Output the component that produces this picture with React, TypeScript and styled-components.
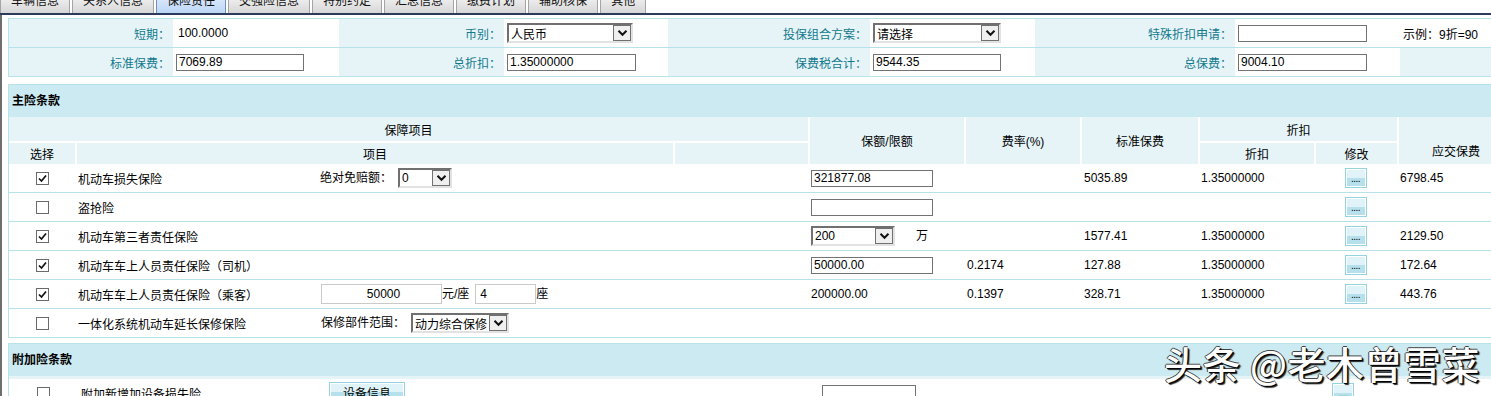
import React from 'react';
import styled, { createGlobalStyle } from 'styled-components';

const line = '#b8e2ea';
const pale = '#e6f4f8';
const band = '#cbeaf1';

const GlobalStyle = createGlobalStyle`
    html, body {
        margin: 0;
        padding: 0;
        background: #fff;
        overflow: hidden;
    }
    body {
        font-family: "Liberation Sans", Arial, "Noto Sans CJK SC", sans-serif;
        font-size: 12px;
        color: #000;
    }
`;

const tabs = ['车辆信息', '关系人信息', '保险责任', '交强险信息', '特别约定', '汇总信息', '缴费计划', '辅助核保', '其他'];

export default function App() {
    return (
        <Page>
            <GlobalStyle />
            <TabBar>
                {tabs.map((t, i) => (
                    <Tab key={t} $active={i === 2}>{t}</Tab>
                ))}
            </TabBar>
            <NavLine />
            <Main>
                <InfoTable>
                    <colgroup>
                        <Col $w={164} /><Col $w={166} /><Col $w={165} /><Col $w={164} />
                        <Col $w={202} /><Col $w={165} /><Col $w={200} /><Col $w={165} /><Col $w={113} />
                    </colgroup>
                    <tbody>
                        <InfoRow>
                            <Label>短期：</Label>
                            <Value><Plain>100.0000</Plain></Value>
                            <Label>币别：</Label>
                            <Value><Select w={126} text="人民币" /></Value>
                            <Label>投保组合方案：</Label>
                            <Value><Select w={128} text="请选择" /></Value>
                            <Label>特殊折扣申请：</Label>
                            <Value><TextBox $w={129} /></Value>
                            <Value>示例：9折=90</Value>
                        </InfoRow>
                        <InfoRow>
                            <Label>标准保费：</Label>
                            <Value><TextBox $w={128}>7069.89</TextBox></Value>
                            <Label>总折扣：</Label>
                            <Value><TextBox $w={129}>1.35000000</TextBox></Value>
                            <Label>保费税合计：</Label>
                            <Value><TextBox $w={128}>9544.35</TextBox></Value>
                            <Label>总保费：</Label>
                            <Value><TextBox $w={129}>9004.10</TextBox></Value>
                            <Label />
                        </InfoRow>
                    </tbody>
                </InfoTable>

                <Section>
                    <SectionTitle>主险条款</SectionTitle>
                    <Grid>
                        <colgroup>
                            <Col $w={66} /><Col $w={243} /><Col $w={355} /><Col $w={135} /><Col $w={156} />
                            <Col $w={116} /><Col $w={118} /><Col $w={116} /><Col $w={83} /><Col $w={116} />
                        </colgroup>
                        <thead>
                            <HeadRow $h={24}>
                                <Th colSpan={4} $first>保障项目</Th>
                                <Th rowSpan={2}>保额/限额</Th>
                                <Th rowSpan={2}>费率(%)</Th>
                                <Th rowSpan={2}>标准保费</Th>
                                <Th colSpan={2}>折扣</Th>
                                <Th rowSpan={2} $bottom>应交保费</Th>
                            </HeadRow>
                            <HeadRow $h={23}>
                                <Th $first $split>选择</Th>
                                <Th colSpan={2} $split>项目</Th>
                                <Th $split />
                                <Th $split>折扣</Th>
                                <Th $split>修改</Th>
                            </HeadRow>
                        </thead>
                        <tbody>
                            <BodyRow>
                                <Center><Check on /></Center>
                                <Td>机动车损失保险</Td>
                                <Td $pl={2}>绝对免赔额：<Gap $w={6} /><Select w={54} text="0" /></Td>
                                <Td />
                                <Td><TextBox $w={122}>321877.08</TextBox></Td>
                                <Td />
                                <Td $pl={4}>5035.89</Td>
                                <Td>1.35000000</Td>
                                <Center><DotButton /></Center>
                                <Td>6798.45</Td>
                            </BodyRow>
                            <BodyRow>
                                <Center><Check /></Center>
                                <Td>盗抢险</Td>
                                <Td /><Td />
                                <Td><TextBox $w={122} /></Td>
                                <Td /><Td /><Td />
                                <Center><DotButton /></Center>
                                <Td />
                            </BodyRow>
                            <BodyRow>
                                <Center><Check on /></Center>
                                <Td>机动车第三者责任保险</Td>
                                <Td /><Td />
                                <Td><Select w={84} text="200" /><Gap $w={21} />万</Td>
                                <Td />
                                <Td $pl={4}>1577.41</Td>
                                <Td>1.35000000</Td>
                                <Center><DotButton /></Center>
                                <Td>2129.50</Td>
                            </BodyRow>
                            <BodyRow>
                                <Center><Check on /></Center>
                                <Td>机动车车上人员责任保险（司机）</Td>
                                <Td /><Td />
                                <Td><TextBox $w={122}>50000.00</TextBox></Td>
                                <Td>0.2174</Td>
                                <Td $pl={4}>127.88</Td>
                                <Td>1.35000000</Td>
                                <Center><DotButton /></Center>
                                <Td>172.64</Td>
                            </BodyRow>
                            <BodyRow>
                                <Center><Check on /></Center>
                                <Td>机动车车上人员责任保险（乘客）</Td>
                                <Td>
                                    <SoftBox $w={121} $center>50000</SoftBox>元/座<Gap $w={6} />
                                    <SoftBox $w={61}>4</SoftBox>座
                                </Td>
                                <Td />
                                <Td>200000.00</Td>
                                <Td>0.1397</Td>
                                <Td $pl={4}>328.71</Td>
                                <Td>1.35000000</Td>
                                <Center><DotButton /></Center>
                                <Td>443.76</Td>
                            </BodyRow>
                            <BodyRow>
                                <Center><Check /></Center>
                                <Td>一体化系统机动车延长保修保险</Td>
                                <Td>保修部件范围：<Gap $w={6} /><Select w={98} text="动力综合保修" /></Td>
                                <Td /><Td /><Td /><Td /><Td /><Td /><Td />
                            </BodyRow>
                        </tbody>
                    </Grid>
                </Section>

                <Section $gap={5}>
                    <SectionTitle>附加险条款</SectionTitle>
                    <Grid>
                        <colgroup>
                            <Col $w={69} /><Col $w={248} /><Col $w={493} /><Col $w={150} />
                            <Col $w={300} /><Col $w={148} /><Col $w={96} />
                        </colgroup>
                        <thead>
                            <HeadRow $h={3}><Th colSpan={7} $first /></HeadRow>
                        </thead>
                        <tbody>
                            <BodyRow>
                                <Center><Check /></Center>
                                <Td>附加新增加设备损失险</Td>
                                <Td><WideButton>设备信息</WideButton></Td>
                                <Td><TextBox $w={94} /></Td>
                                <Td />
                                <Center><DotButton /></Center>
                                <Td />
                            </BodyRow>
                        </tbody>
                    </Grid>
                </Section>
            </Main>
            <Watermark>头条 @老木曾雪菜</Watermark>
        </Page>
    );
}

function Select({ w, text }: { w: number; text: string }) {
    return (
        <SelectFrame $w={w}>
            <SelectText>{text}</SelectText>
            <SelectArrow>
                <svg width="11" height="8" viewBox="0 0 11 8">
                    <path d="M1.5 1.8 L5.5 5.8 L9.5 1.8" fill="none" stroke="#111" strokeWidth="2" />
                </svg>
            </SelectArrow>
        </SelectFrame>
    );
}

function Check({ on }: { on?: boolean }) {
    return (
        <CheckBox>
            {on && (
                <svg width="11" height="11" viewBox="0 0 11 11">
                    <path d="M2 5.5 L4.5 8 L9 2.5" fill="none" stroke="#111" strokeWidth="1.7" />
                </svg>
            )}
        </CheckBox>
    );
}

function DotButton() {
    return <DotBtn><DotLabel>....</DotLabel></DotBtn>;
}

const Page = styled.div`
    position: relative;
    width: 1491px;
    height: 396px;
    overflow: hidden;
`;

const TabBar = styled.div`
    display: flex;
    gap: 2px;
    height: 13px;
    overflow: hidden;
`;

const Tab = styled.div<{ $active?: boolean }>`
    flex: none;
    height: 13px;
    box-sizing: border-box;
    padding: 0 10px;
    line-height: 3px;
    font-size: 12px;
    color: #111;
    border: 1px solid ${p => (p.$active ? '#6f8fbd' : '#a4a4a4')};
    border-top: none;
    border-bottom: none;
    background: ${p => (p.$active
        ? 'linear-gradient(#d6e6fb, #bcd5f5)'
        : 'linear-gradient(#ececec, #d6d6d6)')};
`;

const NavLine = styled.div`
    height: 2px;
    background: #2d3a5b;
`;

const Main = styled.div`
    border-left: 2px solid #6e6e6e;
    padding: 3px 0 0 6px;
    height: 400px;
`;

const Col = styled.col<{ $w: number }>`
    width: ${p => p.$w}px;
`;

const InfoTable = styled.table`
    width: 1505px;
    table-layout: fixed;
    border-spacing: 0;
    border-top: 1px solid ${line};
    border-left: 1px solid ${line};
`;

const InfoRow = styled.tr`
    height: 29px;
    & > td {
        border-bottom: 1px solid ${line};
        padding: 0;
        white-space: nowrap;
        vertical-align: middle;
    }
`;

const Label = styled.td`
    background: ${pale};
    color: #12798d;
    text-align: right;
    padding-right: 3px !important;
`;

const Value = styled.td`
    background: #fff;
    padding-left: 3px !important;
`;

const Plain = styled.span`
    padding-left: 2px;
`;

const TextBox = styled.span<{ $w: number }>`
    display: inline-block;
    box-sizing: border-box;
    width: ${p => p.$w}px;
    height: 17px;
    line-height: 15px;
    border: 1px solid #737373;
    padding-left: 2px;
    background: #fff;
    vertical-align: middle;
    white-space: nowrap;
    overflow: hidden;
`;

const SoftBox = styled.span<{ $w: number; $center?: boolean }>`
    display: inline-block;
    box-sizing: border-box;
    width: ${p => p.$w}px;
    height: 20px;
    line-height: 18px;
    border: 1px solid #cacaca;
    padding-left: 4px;
    text-align: ${p => (p.$center ? 'center' : 'left')};
    vertical-align: middle;
`;

const Gap = styled.span<{ $w: number }>`
    display: inline-block;
    width: ${p => p.$w}px;
`;

const SelectFrame = styled.span<{ $w: number }>`
    display: inline-flex;
    align-items: center;
    box-sizing: border-box;
    width: ${p => p.$w}px;
    height: 20px;
    border-style: solid;
    border-width: 2px;
    border-color: #707070 #e2e2e2 #e2e2e2 #707070;
    background: #fff;
    vertical-align: middle;
`;

const SelectText = styled.span`
    flex: 1;
    padding-left: 2px;
    overflow: hidden;
    white-space: nowrap;
`;

const SelectArrow = styled.span`
    flex: none;
    width: 18px;
    height: 16px;
    box-sizing: border-box;
    border: 1px solid #707070;
    background: #efefef;
    display: flex;
    align-items: center;
    justify-content: center;
`;

const Section = styled.div<{ $gap?: number }>`
    margin-top: ${p => p.$gap ?? 7}px;
    width: 1505px;
    box-sizing: border-box;
    border-top: 1px solid ${line};
    border-left: 1px solid ${line};
`;

const SectionTitle = styled.div`
    height: 32px;
    line-height: 32px;
    background: ${band};
    padding-left: 3px;
    font-weight: bold;
    font-size: 12px;
`;

const Grid = styled.table`
    width: 1504px;
    table-layout: fixed;
    border-spacing: 0;
`;

const HeadRow = styled.tr<{ $h: number }>`
    height: ${p => p.$h}px;
`;

const Th = styled.th<{ $first?: boolean; $split?: boolean; $bottom?: boolean }>`
    background: ${pale};
    font-weight: normal;
    padding: 0;
    text-align: center;
    white-space: nowrap;
    vertical-align: ${p => (p.$bottom ? 'bottom' : 'middle')};
    padding-bottom: ${p => (p.$bottom ? 5 : 0)}px;
    border-left: ${p => (p.$first ? 'none' : '2px solid #fff')};
    border-top: ${p => (p.$split ? '2px solid #fff' : 'none')};
`;

const BodyRow = styled.tr`
    height: 29px;
`;

const Td = styled.td<{ $pl?: number }>`
    padding: 0 0 0 ${p => p.$pl ?? 3}px;
    border-bottom: 1px solid ${line};
    white-space: nowrap;
    vertical-align: middle;
    overflow: hidden;
`;

const Center = styled(Td)`
    padding: 0;
    text-align: center;
`;

const CheckBox = styled.span`
    display: inline-flex;
    align-items: center;
    justify-content: center;
    box-sizing: border-box;
    width: 13px;
    height: 13px;
    border: 1px solid #6a6a6a;
    background: #fff;
    vertical-align: middle;
`;

const DotBtn = styled.span`
    display: inline-flex;
    align-items: flex-end;
    justify-content: center;
    box-sizing: border-box;
    width: 22px;
    height: 20px;
    border: 1px solid #94d3e0;
    box-shadow: inset 0 0 0 1px #fff;
    background: linear-gradient(#dff3f8 50%, #b6e1ec 50%);
    vertical-align: middle;
`;

const DotLabel = styled.span`
    font-size: 10px;
    line-height: 10px;
    padding-bottom: 3px;
    letter-spacing: -0.5px;
`;

const WideButton = styled.span`
    display: inline-block;
    box-sizing: border-box;
    width: 76px;
    height: 22px;
    line-height: 22px;
    text-align: center;
    border: 1px solid #94d3e0;
    box-shadow: inset 0 0 0 1px #fff;
    background: linear-gradient(#dff3f8 45%, #b6e1ec 45%);
    vertical-align: middle;
`;

const Watermark = styled.div`
    position: absolute;
    left: 1164px;
    top: 343px;
    font-family: "Noto Sans CJK SC", sans-serif;
    font-size: 38px;
    line-height: 40px;
    letter-spacing: 0.5px;
    font-weight: 500;
    color: #fff;
    white-space: nowrap;
    text-shadow: 1px 1px 0 #000, 2px 2px 1px #222, -1px 0 0 #444, 0 -1px 0 #444;
`;
